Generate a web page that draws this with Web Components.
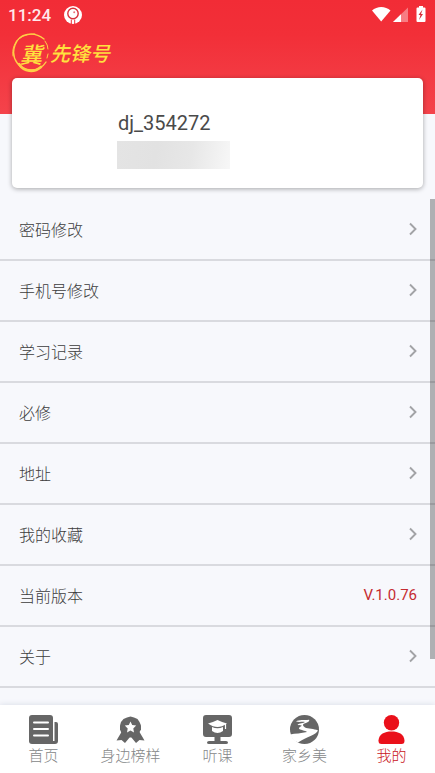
<!DOCTYPE html>
<html lang="zh-CN">
<head>
<meta charset="utf-8">
<meta name="viewport" content="width=device-width, initial-scale=1">
<title>我的</title>
<style>
html, body { margin: 0; height: 100%; }
body { font-family: Roboto, "Noto Sans CJK SC", sans-serif; background: #f7f8fc; }
</style>
</head>
<body>
<profile-app></profile-app>
<script>
const define = (name, html, setup) => {
  const template = document.createElement('template');
  template.innerHTML = html;
  customElements.define(name, class extends HTMLElement {
    constructor() {
      super();
      this.attachShadow({ mode: 'open' }).append(template.content.cloneNode(true));
    }
    connectedCallback() { if (setup) setup(this, this.shadowRoot); }
  });
};

define('status-bar', `
<style>
:host { display: flex; align-items: center; height: 30px; padding: 0 8px; color: #fff; }
time { font-size: 17px; line-height: 30px; font-weight: 500; color: #ffe9ec; }
svg { display: block; }
.app { margin-left: 12px; }
.right { margin-left: auto; }
</style>
<time>11:24</time>
<svg class="app" width="20" height="20" viewBox="0 0 20 20"><circle cx="10" cy="10" r="9" fill="#fff"/><circle cx="10" cy="8.500" r="5.200" fill="none" stroke="#d8323c" stroke-width="1.400"/><circle cx="11.200" cy="7.200" r="1" fill="#e8747b"/><path d="M7.800 14.500h1v4.500h-1zM11.200 14.500h1v4.500h-1z" fill="#ef2d38"/></svg>
<svg class="right" width="56" height="18" viewBox="0 0 56 18" fill="#fff"><path d="M1 4.600C6-.200 14.500-.200 19.500 4.600L10.200 15.500z"/><path d="M22 16 37 1.500V16z" opacity=".38"/><path d="M22 16 30 8.200V16z"/><path d="M48 1.500V0h4v1.500h1.500q1 0 1 1V15q0 1-1 1h-7q-1 0-1-1V2.500q0-1 1-1z"/><path d="m51.500 3.500-4 5.500h2l-1.500 5 4-6h-2z" fill="#d72c37"/></svg>
`);

define('brand-logo', `
<style>
:host { display: flex; align-items: center; height: 44px; padding: 0 12px; color: #ffe13e;
  font-family: "Noto Sans CJK SC", sans-serif; font-weight: 500; font-style: italic; }
.seal { display: grid; place-items: center; width: 38px; height: 44px; }
.seal > * { grid-area: 1 / 1; }
.seal span { font-size: 22px; line-height: 30px; }
.name { font-size: 20px; line-height: 30px; }
</style>
<div class="seal">
<svg width="38" height="42" viewBox="0 0 38 42" fill="none" stroke="#ffce45" stroke-linecap="round"><path d="M32 7C22-1 7 1 3 13c-5 14 5 25 16 25 6 0 12-3 15-8" stroke-width="1.400"/><path d="M7 32c5 8 15 9 22 3" stroke-width="2.600"/><path d="M1 24C-1 11 9 1 23 2" stroke-width="1"/><path d="M33 9q3 4 3 8m0 5-1 4" stroke-width="1"/></svg>
<span>冀</span></div>
<span class="name">先锋号</span>
`);

define('user-card', `
<style>
:host { display: flex; flex-direction: column; align-items: flex-start; box-sizing: border-box; min-height: 110px;
  margin: 0 12px; padding: 33px 24px 19px 105px; gap: 6px; background: #fff; border-radius: 5px; box-shadow: 0 1px 5px #0005; }
h1 { margin: 0; padding-left: 1px; font-size: 20px; line-height: 24px; font-weight: 400; color: #4a4a4a; }
.mask { width: 113px; height: 28px; background: linear-gradient(100deg, #e4e4e4, #e2e2e2 35%, #e7e7e7 65%, #f7f7f7); }
</style>
<h1><slot></slot></h1>
<div class="mask"></div>
`);

define('menu-row', `
<style>
:host { display: block; }
button { all: unset; box-sizing: border-box; display: flex; align-items: center; justify-content: space-between;
  width: 100%; height: 61px; padding: 0 18px 1px 19px; border-bottom: 2px solid #d9dadf; cursor: pointer;
  font-family: "Noto Sans CJK SC", sans-serif; font-weight: 300; font-size: 16px; line-height: 24px; color: #3c3c3c; }
svg { display: block; }
.value { font-family: Roboto, sans-serif; font-weight: 400; font-size: 15px; color: #c52b31; }
</style>
<button type="button"><slot></slot></button>
`, (host, root) => {
  const button = root.querySelector('button');
  const value = host.getAttribute('value');
  button.insertAdjacentHTML('beforeend', value
    ? `<span class="value">${value}</span>`
    : '<svg width="8" height="14" viewBox="0 0 8 14" fill="none" stroke="#a2a3a6" stroke-width="1.900"><path d="m1 1.500 5.500 5.500L1 12.500"/></svg>');
});

const icons = {
  home: '<path d="M3 0h18q3 0 3 3v26H3q-3 0-3-3V3q0-3 3-3z"/><path d="M25.500 7H27q2 0 2 2v17q0 3-3 3h-4V26h3.500z"/><path d="M5 7.500h14M5 14h14M5 20.500h14" stroke="#fff" stroke-width="2" stroke-linecap="round"/>',
  medal: '<path d="M5.500 17 .500 25.500l5-.500 3.500 3 5-6h1l5 6 3.500-3 5 .500-5-8.500z"/><path d="m14.500 1.500 3.500 1 3.500 1.500 2 3 1.500 3.500v4l-2 3.500-2.500 3-3.500 1-2.500.500-3-.500-3.500-1-2.500-3-1.500-3.500v-4l1-3.500 2.500-3L11 2.500z"/><path d="m14.500 6.500 1.700 3.600 4 .5-2.900 2.800.7 4-3.500-1.900-3.500 1.900.7-4-2.900-2.800 4-.5z" fill="#fff"/>',
  lesson: '<path d="M3 0h23q3 0 3 3v16q0 3-3 3h-8.500v4H23q2 0 2 1.500T23 29H6q-2 0-2-1.500T6 26h5.500v-4H3q-3 0-3-3V3q0-3 3-3z"/><path d="M5 8.500Q10 7 14.500 5 19 7 24 8.500 19 12 14.500 12T5 8.500z" fill="#fff"/><path d="M9 12q5.500 2.500 11 0v4q-5.500 4-11 0z" fill="#fff"/><path d="M22.500 9v5" stroke="#fff" stroke-width="1.200"/>',
  river: '<circle cx="14.500" cy="14.500" r="14.500"/><path d="M6 6.500C9 4.500 14 5.500 19 4.800 20 6 18 7.500 14.500 8.500 12 9.500 13 11 15 12.500 18 14 24 13.500 28 15.500 26 20 17 21.500 8 27.500L4 25.500 1.500 22-.500 19.500C5 18.500 11 18.500 17 17 16 15.500 9 15 9 13.500 8.500 12 12 11.500 11.500 10.500 10 10 8 10.500 7.500 9.500 9 8.500 14 8 15 7 12 6.500 9 7.500 6 6.500z" fill="#fff"/>',
  person: '<circle cx="14.500" cy="7.700" r="7.700"/><path d="M1.500 25.500C2 19 7.500 16.500 14.500 16.500S27 19 27.500 25.500q.2 3.500-3 3.500h-20q-3.200 0-3-3.500z"/>'
};

define('nav-item', `
<style>
:host { display: block; flex: 1; }
a { display: flex; flex-direction: column; align-items: center; gap: 1px; padding-top: 10px; text-decoration: none;
  font-family: "Noto Sans CJK SC", sans-serif; font-weight: 300; font-size: 15px; line-height: 20px; color: #858788; white-space: nowrap; }
svg { display: block; fill: #666; }
:host([active]) a { color: #c9141b; }
:host([active]) svg { fill: #ea101a; }
</style>
<a href="#"><svg width="29" height="29" viewBox="0 0 29 29"></svg><span><slot></slot></span></a>
`, (host, root) => {
  root.querySelector('svg').innerHTML = icons[host.getAttribute('icon')];
  if (host.hasAttribute('active')) root.querySelector('a').setAttribute('aria-current', 'page');
});

define('profile-app', `
<style>
:host { display: flex; flex-direction: column; height: 100vh; overflow: hidden; background: #f7f8fc; }
header { background: linear-gradient(#f22c36, #f22f38 30%, #f4434b); padding-bottom: 39px; }
brand-logo { margin-top: 1px; }
user-card { margin-top: -36px; }
main { position: relative; box-sizing: border-box; flex: 1; min-height: 0; margin-top: 11px; padding-top: 1px; overflow: hidden; }
.thumb { position: absolute; top: 0; right: 0; width: 5px; height: 91%; background: #0000004a; }
nav { position: relative; display: flex; height: 68px; background: #fff; box-shadow: 0 -1px 5px #dfe2eb; }
</style>
<header><status-bar></status-bar><brand-logo></brand-logo></header>
<user-card>dj_354272</user-card>
<main>
<menu-row>密码修改</menu-row>
<menu-row>手机号修改</menu-row>
<menu-row>学习记录</menu-row>
<menu-row>必修</menu-row>
<menu-row>地址</menu-row>
<menu-row>我的收藏</menu-row>
<menu-row value="V.1.0.76">当前版本</menu-row>
<menu-row>关于</menu-row>
<div class="thumb"></div>
</main>
<nav>
<nav-item icon="home">首页</nav-item>
<nav-item icon="medal">身边榜样</nav-item>
<nav-item icon="lesson">听课</nav-item>
<nav-item icon="river">家乡美</nav-item>
<nav-item icon="person" active>我的</nav-item>
</nav>
`);
</script>
</body>
</html>
